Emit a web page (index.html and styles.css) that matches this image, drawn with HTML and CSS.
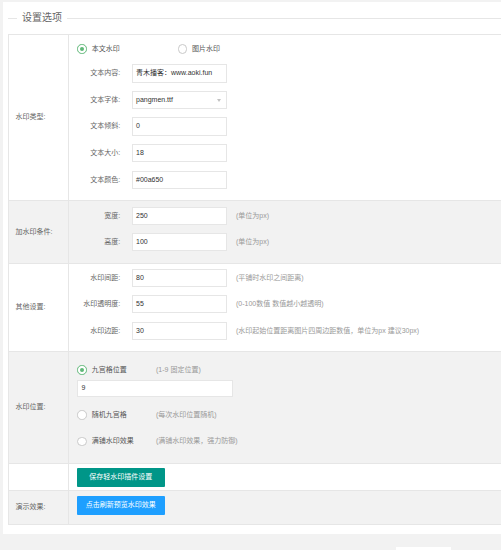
FILE: index.html
```html
<!DOCTYPE html>
<html>
<head>
<meta charset="utf-8">
<title>设置选项</title>
<link rel="stylesheet" href="styles.css">
</head>
<body>
<div class="card">
  <div class="legend"><span class="legend-text">设置选项</span></div>
  <div class="table">
    <div class="row">
      <div class="label">水印类型:</div>
      <div class="cell r1">
        <div class="radios">
          <span class="radio radio-wide"><i class="dot on"></i>本文水印</span>
          <span class="radio"><i class="dot"></i>图片水印</span>
        </div>
        <div class="item"><span class="item-label">文本内容:</span><span class="input">青木播客：www.aoki.fun</span></div>
        <div class="item"><span class="item-label">文本字体:</span><span class="input select">pangmen.ttf<i class="arrow"></i></span></div>
        <div class="item"><span class="item-label">文本倾斜:</span><span class="input">0</span></div>
        <div class="item"><span class="item-label">文本大小:</span><span class="input">18</span></div>
        <div class="item"><span class="item-label">文本颜色:</span><span class="input">#00a650</span></div>
      </div>
    </div>
    <div class="row grey">
      <div class="label">加水印条件:</div>
      <div class="cell r2">
        <div class="item"><span class="item-label">宽度:</span><span class="input">250</span><span class="hint">(单位为px)</span></div>
        <div class="item"><span class="item-label">高度:</span><span class="input">100</span><span class="hint">(单位为px)</span></div>
      </div>
    </div>
    <div class="row">
      <div class="label">其他设置:</div>
      <div class="cell r3">
        <div class="item"><span class="item-label">水印间距:</span><span class="input">80</span><span class="hint">(平铺时水印之间距离)</span></div>
        <div class="item"><span class="item-label">水印透明度:</span><span class="input">55</span><span class="hint">(0-100数值 数值越小越透明)</span></div>
        <div class="item"><span class="item-label">水印边距:</span><span class="input">30</span><span class="hint">(水印起始位置距离图片四周边距数值，单位为px 建议30px)</span></div>
      </div>
    </div>
    <div class="row grey">
      <div class="label">水印位置:</div>
      <div class="cell r4">
        <div class="pos pos-first"><span class="radio radio-pos"><i class="dot on"></i>九宫格位置</span><span class="hint-pos">(1-9 固定位置)</span></div>
        <div class="input pos-input">9</div>
        <div class="pos pos-second"><span class="radio radio-pos"><i class="dot"></i>随机九宫格</span><span class="hint-pos">(每次水印位置随机)</span></div>
        <div class="pos pos-third"><span class="radio radio-pos"><i class="dot"></i>满铺水印效果</span><span class="hint-pos">(满铺水印效果，强力防御)</span></div>
      </div>
    </div>
    <div class="row">
      <div class="label"></div>
      <div class="cell r5">
        <div class="btn btn-green">保存轻水印插件设置</div>
      </div>
    </div>
    <div class="row grey">
      <div class="label">演示效果:</div>
      <div class="cell r6">
        <div class="btn btn-blue">点击刷新预览水印效果</div>
      </div>
    </div>
  </div>
</div>
<div class="footer"><div class="footer-box"></div></div>
</body>
</html>
```
FILE: styles.css
```css
* { box-sizing: border-box; margin: 0; padding: 0; }
html, body { background: #f2f2f2; overflow: hidden; }
body {
  width: 501px;
  height: 550px;
  font-family: "Liberation Sans", "Noto Sans CJK SC", sans-serif;
  font-size: 7px;
  line-height: 1.2;
  color: #666;
}
.card {
  background: #fff;
  margin: 2px 0 0 3px;
  padding: 0 0 9px 5px;
}
.legend {
  display: flex;
  align-items: center;
  height: 32px;
  font-size: 10px;
  color: #666;
}
.legend::before {
  content: "";
  width: 9px;
  border-top: 1px solid #e6e6e6;
}
.legend::after {
  content: "";
  flex: 1;
  border-top: 1px solid #e6e6e6;
}
.legend-text { padding: 0 5px; line-height: 1; }
.table {
  border-top: 1px solid #e6e6e6;
  border-left: 1px solid #e6e6e6;
}
.row {
  display: flex;
  border-bottom: 1px solid #e6e6e6;
  background: #fff;
}
.row.grey { background: #f2f2f2; }
.label {
  width: 60px;
  flex: none;
  border-right: 1px solid #e6e6e6;
  padding-left: 6.6px;
  display: flex;
  align-items: center;
  color: #666;
}
.cell {
  flex: 1;
  min-width: 0;
  display: flex;
  flex-direction: column;
}
.r1 { padding: 7px 0 10.6px; gap: 8.3px; }
.r2 { padding: 6.1px 0 12px; gap: 7.7px; }
.r3 { padding: 4.7px 0 11px; gap: 8.2px; }
.r4 { padding: 10.5px 0 13.5px; }
.r5 { padding: 4px 0 3px; }
.r6 { padding: 5.3px 0 8.7px; }
.radios {
  display: flex;
  align-items: center;
  height: 14px;
  margin-left: 8.3px;
}
.radio {
  display: flex;
  align-items: center;
  color: #555;
}
.radio-wide { width: 100.4px; }
.dot {
  width: 9.4px;
  height: 9.4px;
  border: 1px solid #c9c9c9;
  border-radius: 50%;
  margin-right: 5px;
  display: flex;
  align-items: center;
  justify-content: center;
  background: #fff;
}
.dot.on { border-color: #5fb878; }
.dot.on::after {
  content: "";
  width: 4.4px;
  height: 4.4px;
  border-radius: 50%;
  background: #5fb878;
}
.item {
  display: flex;
  align-items: center;
  height: 18.3px;
}
.item-label {
  width: 62.7px;
  flex: none;
  text-align: right;
  padding-right: 11.4px;
  color: #666;
}
.input {
  width: 95px;
  height: 100%;
  flex: none;
  border: 1px solid #e6e6e6;
  background: #fff;
  padding-left: 3.3px;
  color: #333;
  display: flex;
  align-items: center;
}
.select {
  justify-content: space-between;
  padding-right: 5px;
}
.arrow {
  width: 0;
  height: 0;
  border-left: 2.5px solid transparent;
  border-right: 2.5px solid transparent;
  border-top: 3px solid #c2c2c2;
}
.hint {
  margin-left: 9.3px;
  color: #999;
  white-space: nowrap;
}
.pos {
  display: flex;
  align-items: center;
  height: 15px;
  margin-left: 8.3px;
}
.pos-second { margin-top: 10.8px; }
.pos-third { margin-top: 11.4px; }
.radio-pos { width: 78.7px; }
.hint-pos { color: #999; white-space: nowrap; }
.pos-input {
  width: 156px;
  height: 17px;
  margin: 2.5px 0 0 8.3px;
}
.btn {
  width: 88px;
  height: 19.3px;
  margin-left: 7.7px;
  display: flex;
  align-items: center;
  justify-content: center;
  color: #fff;
  border-radius: 1px;
}
.btn-green { background: #009688; }
.btn-blue { background: #1e9fff; height: 19px; }
.footer {
  display: flex;
  padding-left: 396px;
  margin-top: 13px;
}
.footer-box {
  width: 55px;
  height: 10px;
  background: #fff;
}
```
